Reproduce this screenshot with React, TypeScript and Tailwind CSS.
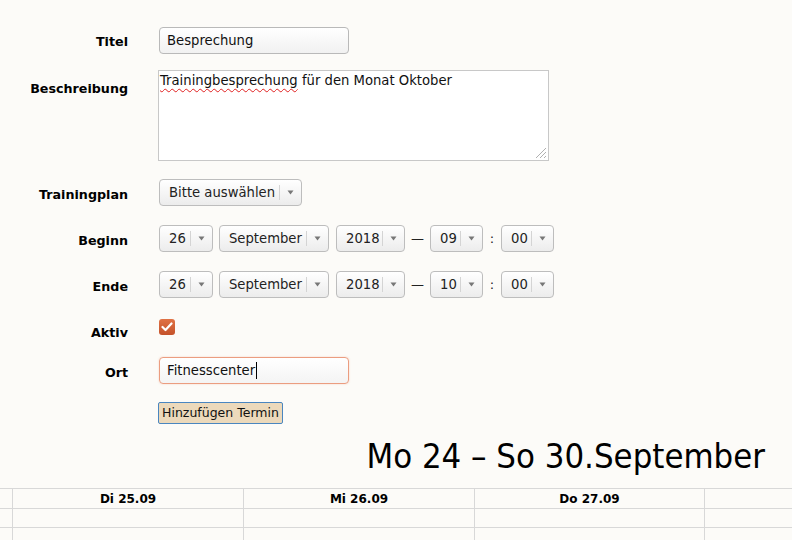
import React from "react";

const font = { fontFamily: '"DejaVu Sans", Verdana, sans-serif' };

function Select({ value, w }: { value: string; w: string }) {
  return (
    <div
      className={`flex h-[27px] items-stretch rounded-[4px] border border-[#bdbdbd] bg-gradient-to-b from-[#ffffff] to-[#ececec] text-[13.2px] text-[#222] ${w}`}
    >
      <div className="flex flex-1 items-center pl-[9px]">{value}</div>
      <div className="my-[5px] w-px bg-[#d4d4d4]" />
      <div className="flex w-[21px] items-center justify-center">
        <svg width="7" height="5" viewBox="0 0 7 5">
          <path d="M0.5 0.5 L6.5 0.5 L3.5 4.5 Z" fill="#777" />
        </svg>
      </div>
    </div>
  );
}

function Label({ children, extra = "" }: { children: React.ReactNode; extra?: string }) {
  return (
    <div className={`w-[128px] shrink-0 text-right text-[12.7px] font-bold text-black ${extra}`}>{children}</div>
  );
}

function DateRow({ hour }: { hour: string }) {
  return (
    <div className="flex items-center">
      <Select value="26" w="w-[54px]" />
      <div className="w-[6px]" />
      <Select value="September" w="w-[110px]" />
      <div className="w-[7px]" />
      <Select value="2018" w="w-[69px]" />
      <div className="flex w-[25px] justify-center text-[13px] text-[#222]">—</div>
      <Select value={hour} w="w-[53px]" />
      <div className="flex w-[18px] justify-center text-[13px] text-[#222]">:</div>
      <Select value="00" w="w-[53px]" />
    </div>
  );
}

export default function App() {
  return (
    <div className="min-h-[540px] w-[792px] overflow-hidden bg-[#fcfbf8]" style={font}>
      <div className="flex flex-col pt-[27px]">
        {/* Titel */}
        <div className="flex items-center gap-[31px]">
          <Label extra="pt-[3px]">Titel</Label>
          <div className="flex h-[27px] w-[190px] items-center rounded-[4px] border border-[#b9b9b9] bg-gradient-to-b from-[#ffffff] to-[#f1f1f1] pl-[7px] text-[13.2px] text-[#111]">
            Besprechung
          </div>
        </div>
        {/* Beschreibung */}
        <div className="mt-[16px] flex items-start gap-[30px]">
          <Label extra="pt-[9px]">Beschreibung</Label>
          <div className="relative h-[91px] w-[391px] border border-[#c8c8c8] bg-white pl-[1px] pt-[2px] text-[13.2px] leading-[16px] text-[#111]">
            <span className="underline decoration-[#e02020] decoration-wavy decoration-1 underline-offset-[3px]">
              Trainingbesprechung
            </span>{" "}
            für den Monat Oktober
            <svg className="absolute bottom-[1px] right-[1px]" width="13" height="13" viewBox="0 0 13 13">
              <path d="M12 2 L2 12 M12 6 L6 12 M12 10 L10 12" stroke="#b0b0b0" strokeWidth="1" />
            </svg>
          </div>
        </div>
        {/* Trainingplan */}
        <div className="mt-[18px] flex items-center gap-[31px]">
          <Label extra="pt-[4px]">Trainingplan</Label>
          <Select value="Bitte auswählen" w="w-[143px]" />
        </div>
        {/* Beginn */}
        <div className="mt-[19px] flex items-center gap-[31px]">
          <Label extra="pt-[4px]">Beginn</Label>
          <DateRow hour="09" />
        </div>
        {/* Ende */}
        <div className="mt-[19px] flex items-center gap-[31px]">
          <Label extra="pt-[4px]">Ende</Label>
          <DateRow hour="10" />
        </div>
        {/* Aktiv */}
        <div className="mt-[21px] flex h-[16px] items-start gap-[31px] overflow-visible">
          <Label extra="pt-[6px] leading-[16px]">Aktiv</Label>
          <div className="flex h-[16px] w-[16px] shrink-0 items-center justify-center rounded-[3px] bg-gradient-to-b from-[#e07245] to-[#c4522a]">
            <svg width="12" height="10" viewBox="0 0 12 10">
              <path d="M1.5 5 L4.5 8 L10.5 1.5" fill="none" stroke="white" strokeWidth="2.2" strokeLinecap="round" strokeLinejoin="round" />
            </svg>
          </div>
        </div>
        {/* Ort */}
        <div className="mt-[22px] flex items-center gap-[31px]">
          <Label extra="pt-[5px]">Ort</Label>
          <div className="flex h-[27px] w-[190px] items-center rounded-[4px] border border-[#eb9d80] bg-gradient-to-b from-[#ffffff] to-[#f4f4f4] pl-[7px] text-[13.2px] text-[#111] shadow-[0_0_2px_rgba(235,130,90,0.35)]">
            Fitnesscenter
            <span className="ml-[1px] inline-block h-[17px] w-px bg-black" />
          </div>
        </div>
        {/* Button */}
        <div className="mt-[18px] flex gap-[30px]">
          <div className="w-[128px] shrink-0" />
          <div className="flex h-[22px] w-[125px] items-center justify-center rounded-[2px] border border-[#4a86c0] bg-[#ecd9bb] text-[12.5px] text-[#111]">
            Hinzufügen Termin
          </div>
        </div>
        {/* Heading */}
        <div
          className="mt-[12px] pr-[27px] text-right text-[34.4px] leading-[40px] text-black"
          style={{ fontFamily: '"DejaVu Sans Condensed", "DejaVu Sans", sans-serif', fontStretch: "condensed" }}
        >
          Mo 24 – So 30.September
        </div>
        {/* Calendar table */}
        <div className="mt-[12px] border-t border-[#d8d8d8]">
          <div className="grid grid-cols-[13px_231px_231px_230px_1fr] border-b border-[#d8d8d8]">
            <div className="h-[19px] border-r border-[#d8d8d8]" />
            <div className="flex h-[19px] items-center justify-center border-r border-[#d8d8d8] text-[12px] font-bold">Di 25.09</div>
            <div className="flex h-[19px] items-center justify-center border-r border-[#d8d8d8] text-[12px] font-bold">Mi 26.09</div>
            <div className="flex h-[19px] items-center justify-center border-r border-[#d8d8d8] text-[12px] font-bold">Do 27.09</div>
            <div className="h-[19px]" />
          </div>
          {[0, 1].map((r) => (
            <div key={r} className="grid grid-cols-[13px_231px_231px_230px_1fr] border-b border-[#d8d8d8]">
              <div className="h-[18px] border-r border-[#d8d8d8]" />
              <div className="h-[18px] border-r border-[#d8d8d8]" />
              <div className="h-[18px] border-r border-[#d8d8d8]" />
              <div className="h-[18px] border-r border-[#d8d8d8]" />
              <div className="h-[18px]" />
            </div>
          ))}
        </div>
      </div>
    </div>
  );
}
